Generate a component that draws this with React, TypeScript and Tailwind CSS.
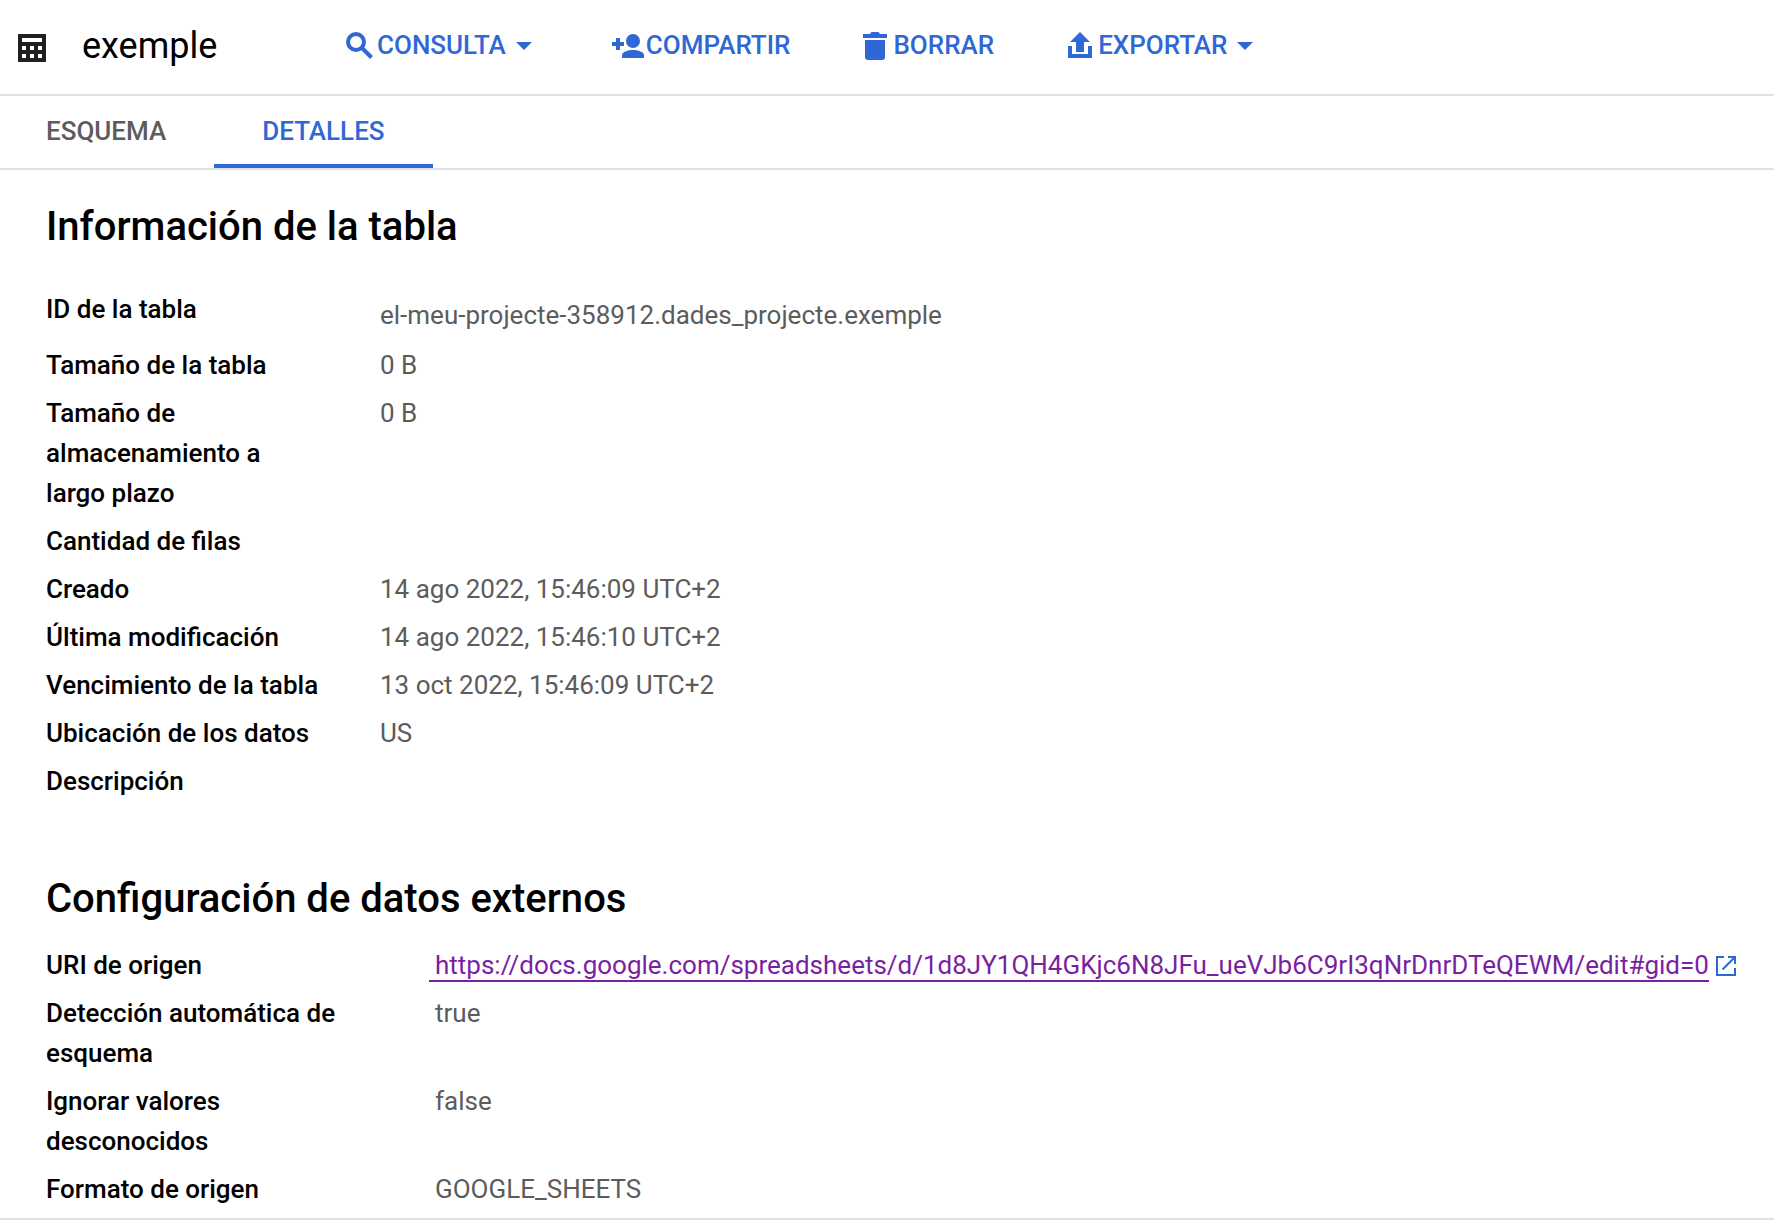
import React from "react";

type Row = { label: string; value?: React.ReactNode; offset?: boolean };

const tableInfo: Row[] = [
  { label: "ID de la tabla", value: "el-meu-projecte-358912.dades_projecte.exemple", offset: true },
  { label: "Tamaño de la tabla", value: "0 B" },
  { label: "Tamaño de almacenamiento a largo plazo", value: "0 B" },
  { label: "Cantidad de filas" },
  { label: "Creado", value: "14 ago 2022, 15:46:09 UTC+2" },
  { label: "Última modificación", value: "14 ago 2022, 15:46:10 UTC+2" },
  { label: "Vencimiento de la tabla", value: "13 oct 2022, 15:46:09 UTC+2" },
  { label: "Ubicación de los datos", value: "US" },
  { label: "Descripción" },
];

const sheetUrl =
  "https://docs.google.com/spreadsheets/d/1d8JY1QH4GKjc6N8JFu_ueVJb6C9rI3qNrDnrDTeQEWM/edit#gid=0";

const externalConfig: Row[] = [
  {
    label: "URI de origen",
    value: (
      <span className="-ml-1.5 block whitespace-nowrap">
        <a href={sheetUrl} className="border-b-2 border-[#7b1fa2] pl-1.5 text-[#7b1fa2]">
          {sheetUrl}
        </a>
        <OpenIcon />
      </span>
    ),
  },
  { label: "Detección automática de esquema", value: "true" },
  { label: "Ignorar valores desconocidos", value: "false" },
  { label: "Formato de origen", value: "GOOGLE_SHEETS" },
];

function TableIcon() {
  return (
    <svg width="28" height="28" viewBox="0 0 28 28" fill="#212121" fillRule="evenodd" aria-hidden="true">
      <path d="M0 0h28v28H0zM4 4v4h20V4zM4 12v4h4v-4zM12 12v4h4v-4zM20 12v4h4v-4zM4 20v4h4v-4zM12 20v4h4v-4zM20 20v4h4v-4z" />
    </svg>
  );
}

function SearchIcon() {
  return (
    <svg width="28" height="28" viewBox="0 0 28 28" fill="none" stroke="currentColor" strokeWidth="4" aria-hidden="true">
      <circle cx="10" cy="10" r="8" />
      <path d="M15.5 15.5l10 10" />
    </svg>
  );
}

function ShareIcon() {
  return (
    <svg width="32" height="24" viewBox="0 0 32 24" fill="currentColor" aria-hidden="true">
      <path d="M4 4h4v4h4v4H8v4H4v-4H0V8h4z" />
      <circle cx="21" cy="7" r="7" />
      <path d="M10 24v-3c0-3 6-5 11-5s11 2 11 5v3z" />
    </svg>
  );
}

function TrashIcon() {
  return (
    <svg width="24" height="28" viewBox="0 0 24 28" fill="currentColor" aria-hidden="true">
      <path d="M0 2h7l1.500-2h7L17 2h7v4H0zM2 8h20v17a3 3 0 0 1-3 3H5a3 3 0 0 1-3-3z" />
    </svg>
  );
}

function ExportIcon() {
  return (
    <svg width="24" height="28" viewBox="0 0 24 28" fill="currentColor" aria-hidden="true">
      <path d="M12 0l10 10h-6v10H8V10H2z" />
      <path d="M0 14h4v8h16v-8h4v12H0z" />
    </svg>
  );
}

function OpenIcon() {
  return (
    <svg
      width="20"
      height="20"
      viewBox="0 0 20 20"
      fill="none"
      stroke="#2f68d4"
      strokeWidth="2"
      aria-hidden="true"
      className="ml-[7px] inline-block align-[-2px]"
    >
      <path d="M8 1H1v18h18v-7M12 1h7v7M18.500 1.500L6.500 13.500" />
    </svg>
  );
}

function Caret() {
  return (
    <svg width="16" height="8" viewBox="0 0 16 8" fill="currentColor" aria-hidden="true" className="ml-1">
      <path d="M0 0h16L8 8z" />
    </svg>
  );
}

function Details({ rows, columns }: { rows: Row[]; columns: string }) {
  return (
    <dl>
      {rows.map((row) => (
        <div key={row.label} className={`grid py-1 ${columns}`}>
          <dt className="pr-14 font-medium text-black">{row.label}</dt>
          <dd className={row.offset ? "pt-1.5 pb-0.5" : ""}>{row.value}</dd>
        </div>
      ))}
    </dl>
  );
}

export default function App() {
  return (
    <div className="overflow-x-hidden border-b-2 border-[#e0e0e0] bg-white font-[Roboto,sans-serif] text-[26px] leading-10 text-[#5c5c5c]">
      <header className="flex h-24 items-center border-b-2 border-[#e0e0e0] pb-0.5 pl-[18px] font-medium text-[#2f68d4]">
        <div className="flex w-[328px] items-center gap-9 pt-1">
          <TableIcon />
          <h1 className="pb-1 text-4xl font-normal text-black">exemple</h1>
        </div>
        <div className="flex items-center gap-[74px]">
          <button className="mr-1.5 flex items-center gap-1.5">
            <span className="flex items-center gap-[3px]">
              <SearchIcon />
              <span className="pb-0.5">CONSULTA</span>
            </span>
            <Caret />
          </button>
          <button className="flex items-center gap-0.5">
            <ShareIcon />
            <span className="pb-0.5">COMPARTIR</span>
          </button>
          <button className="-ml-px flex items-center gap-1.5">
            <TrashIcon />
            <span className="pb-0.5">BORRAR</span>
          </button>
          <button className="flex items-center gap-1.5">
            <ExportIcon />
            <span className="pb-0.5">EXPORTAR</span>
            <Caret />
          </button>
        </div>
      </header>
      <nav className="flex h-[74px] border-b-2 border-[#e0e0e0] font-medium" role="tablist">
        <button role="tab" aria-selected="false" className="border-b-4 border-transparent pt-0.5 pr-12 pl-[46px]">
          ESQUEMA
        </button>
        <button role="tab" aria-selected="true" className="border-b-4 border-[#2f68d4] px-12 pt-0.5 text-[#2f68d4]">
          DETALLES
        </button>
      </nav>
      <main className="pb-[5px] pl-[46px]">
        <section className="pt-[33px]">
          <h2 className="mb-[34px] text-[40px] leading-12 font-medium text-black">Información de la tabla</h2>
          <Details rows={tableInfo} columns="grid-cols-[334px_1fr]" />
        </section>
        <section className="pt-[70px]">
          <h2 className="mb-[18px] text-[40px] leading-12 font-medium text-black">Configuración de datos externos</h2>
          <Details rows={externalConfig} columns="grid-cols-[389px_1fr]" />
        </section>
      </main>
    </div>
  );
}
